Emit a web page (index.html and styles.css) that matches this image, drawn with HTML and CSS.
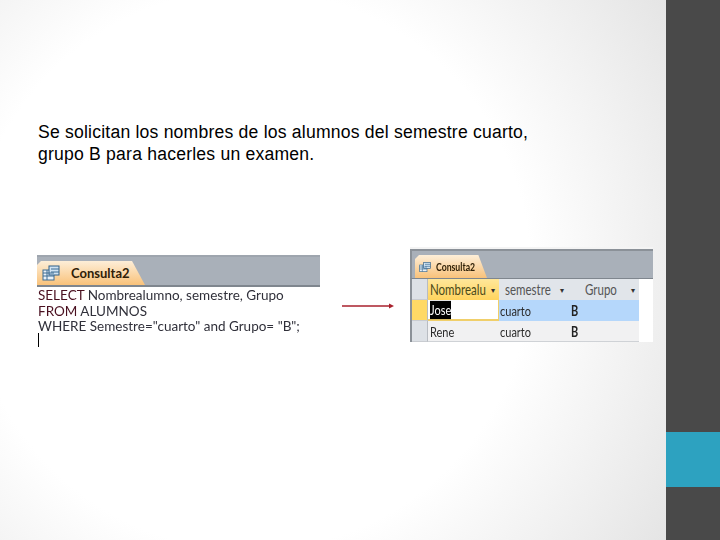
FILE: index.html
```html
<!DOCTYPE html>
<html lang="es">
<head>
  <meta charset="UTF-8">
  <title>Consulta</title>
  <link rel="stylesheet" href="styles.css">
</head>
<body>
  <div class="slide">
    <div class="main">
      <p class="intro">Se solicitan los nombres de los alumnos del semestre cuarto,<br>grupo B para hacerles un examen.</p>

      <div class="shots">
        <div class="sql-shot">
          <div class="tabbar">
            <div class="tab">
              <svg class="tab-icon" viewBox="0 0 18 16">
                <rect x="1" y="5" width="11" height="10" fill="#e8f0f8" stroke="#3d6d94"/>
                <rect x="7" y="1" width="10" height="9" fill="#cfe2f2" stroke="#2f5f88"/>
                <path d="M1 8h11M1 11h11M5 5v10M9 4h8M9 7h8" stroke="#3d6d94" fill="none"/>
              </svg>
              <span>Consulta2</span>
            </div>
          </div>
          <div class="sql">
            <div><b>SELECT</b> Nombrealumno, semestre, Grupo</div>
            <div><b>FROM</b> ALUMNOS</div>
            <div>WHERE Semestre="cuarto" and Grupo= "B";</div>
            <div class="cursor"></div>
          </div>
        </div>

        <svg class="arrow" viewBox="0 0 52 6">
          <path d="M0 3h48" stroke="#a8202c" stroke-width="1.5"/>
          <path d="M52 3l-5-2.5v5z" fill="#a8202c"/>
        </svg>

        <div class="result-shot">
          <div class="ticks"></div>
          <div class="tabbar small">
            <div class="tab">
              <svg class="tab-icon" viewBox="0 0 18 16">
                <rect x="1" y="5" width="11" height="10" fill="#e8f0f8" stroke="#3d6d94"/>
                <rect x="7" y="1" width="10" height="9" fill="#cfe2f2" stroke="#2f5f88"/>
                <path d="M1 8h11M1 11h11M5 5v10M9 4h8M9 7h8" stroke="#3d6d94" fill="none"/>
              </svg>
              <span class="tall">Consulta2</span>
            </div>
          </div>
          <div class="grid">
            <div class="corner"></div>
            <div class="head head-active"><span class="tall">Nombrealu</span><i>▾</i></div>
            <div class="head"><span class="tall">semestre</span><i>▾</i></div>
            <div class="head head-grupo"><span class="tall">Grupo</span><i>▾</i></div>

            <div class="selector selector-active"></div>
            <div class="cell cell-name cell-edit"><span class="tall picked">Jose</span></div>
            <div class="cell row-active"><span class="tall">cuarto</span></div>
            <div class="cell row-active cell-b"><span class="tall">B</span></div>

            <div class="selector"></div>
            <div class="cell cell-name"><span class="tall">Rene</span></div>
            <div class="cell"><span class="tall">cuarto</span></div>
            <div class="cell cell-b"><span class="tall">B</span></div>
          </div>
        </div>
      </div>
    </div>

    <div class="sidebar">
      <div class="side-dark"></div>
      <div class="side-accent"></div>
      <div class="side-end"></div>
    </div>
  </div>
</body>
</html>
```

FILE: styles.css
```css
* {
  box-sizing: border-box;
}

body {
  margin: 0;
  font-family: 'Liberation Sans', Arial, sans-serif;
  background: #fff;
}

.slide {
  display: flex;
  width: 720px;
  height: 540px;
  overflow: hidden;
}

.main {
  flex: 1;
  padding: 121px 0 0 37px;
  background: radial-gradient(circle at 250px 270px, #fff 0, #fff 280px, #e4e4e4 500px);
}

.intro {
  margin: 0 0 82px 1px;
  font-size: 17.6px;
  line-height: 22px;
  letter-spacing: 0.2px;
  color: #000;
}

.shots {
  display: flex;
  align-items: flex-start;
}

/* left screenshot */
.sql-shot {
  width: 283px;
  margin-top: 8px;
  font-family: Lato, 'Noto Sans', sans-serif;
}

.tabbar {
  display: flex;
  align-items: flex-end;
  height: 32px;
  padding-top: 4px;
  background: #a9b0b9;
  border-top: 2px solid #9ea5ae;
  border-bottom: 2px solid #7f868e;
}

.tab {
  display: flex;
  align-items: center;
  gap: 11px;
  width: 108px;
  height: 100%;
  padding-left: 5px;
  background: linear-gradient(#fdeed8, #f9c27a);
  clip-path: polygon(0 4px, 4px 0, 88% 0, 100% 100%, 0 100%);
  font-size: 13px;
  font-weight: 700;
  color: #2f2008;
}

.tab-icon {
  width: 18px;
  height: 16px;
  flex: none;
}

.sql {
  padding: 1px 0 0 1px;
  background: #fff;
  font-size: 13.5px;
  line-height: 15.5px;
  color: #30303a;
  filter: blur(0.3px);
}

.sql b {
  font-weight: 400;
  color: #4a1020;
}

.cursor {
  width: 1px;
  height: 14px;
  margin-top: -2px;
  background: #000;
}

.arrow {
  width: 52px;
  height: 6px;
  margin: 56px 16px 0 22px;
  flex: none;
}

/* right screenshot */
.result-shot {
  width: 243px;
  font-family: Lato, 'Noto Sans', sans-serif;
  background: #fff;
}

.ticks {
  height: 2px;
  background: #f4f4f4;
}

.tall {
  display: inline-block;
  transform: scaleY(1.3);
}

.tabbar.small {
  height: 30px;
  padding: 4px 0 0 3px;
  border-top: 2px solid #8b9198;
  border-left: 2px solid #8b9198;
  border-bottom: 1px solid #7f868e;
}

.small .tab {
  flex: none;
  gap: 5px;
  width: 72px;
  padding-left: 4px;
  font-size: 8.7px;
}

.small .tab-icon {
  width: 12px;
  height: 14px;
}

.grid {
  display: grid;
  grid-template-columns: 16px 71px 66px 74px;
  grid-template-rows: 21px 21px 21px;
  width: 229px;
  border-left: 2px solid #8b9198;
  font-size: 11px;
  color: #2a2a2a;
  filter: blur(0.25px);
}

.corner,
.selector {
  background: #dde1e6;
  border-right: 1px solid #b8bcc2;
  border-bottom: 1px solid #c9ccd1;
}

.selector-active {
  background: #ffd966;
}

.head {
  display: flex;
  align-items: center;
  justify-content: space-between;
  padding: 0 1px 0 6px;
  background: #e1e5ea;
  color: #555;
  font-size: 11.5px;
}

.head i {
  font-style: normal;
  font-size: 8px;
  color: #333;
}

.head-active {
  padding: 0 4px 0 2px;
  background: linear-gradient(#ffe79a, #ffd45e);
  color: #4a4a1a;
}

.head-grupo {
  padding: 0 4px 0 20px;
}

.cell {
  display: flex;
  align-items: center;
  padding-left: 1px;
  background: #f1f1f2;
  border-bottom: 1px solid #cfd2d6;
}

.cell-name {
  padding-left: 2px;
}

.row-active {
  background: #b5d7fb;
  border-bottom: none;
}

.cell-b {
  padding-left: 6px;
  color: #222;
  font-weight: 700;
}

.cell-edit {
  background: #fff;
  border-bottom: 2px solid #f0cf6a;
  border-right: 1px solid #f0cf6a;
}

.picked {
  background: #000;
  color: #fff;
  line-height: 14px;
}

/* slide side strip */
.sidebar {
  display: flex;
  flex-direction: column;
  width: 54px;
  background: #494949;
}

.side-dark {
  height: 432px;
}

.side-accent {
  height: 55px;
  background: #2da2c0;
}

.side-end {
  flex: 1;
}
```
